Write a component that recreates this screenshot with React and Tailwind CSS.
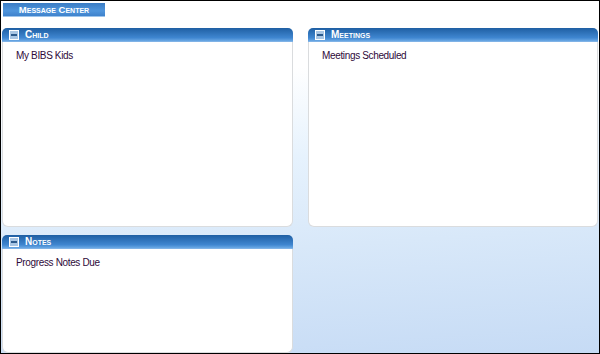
import React from 'react'

function MinusBox() {
  return (
    <span className="w-[10px] h-[10px] border border-white bg-[#a9c6e4] flex items-center justify-center shrink-0">
      <span className="w-[6px] h-[2px] bg-[#2c5a8c]" />
    </span>
  )
}

function Panel({ title, children, className = '' }) {
  return (
    <div className={`flex flex-col ${className}`}>
      <div className="h-[14px] rounded-t-[5px] bg-[linear-gradient(#1f5fa3,#3f86d0_75%,#6aa8e4)] flex items-center gap-[6px] pl-[7px] border-b border-[#7fb2e6]">
        <MinusBox />
        <span className="text-white font-bold text-[10px] leading-none [font-variant:small-caps]">
          {title}
        </span>
      </div>
      <div className="flex-1 bg-white rounded-b-[6px] border border-t-0 border-[#dadcde] pl-[13px] pt-[7px] text-[10px] leading-[13px] tracking-[-0.35px] text-[#2e0a3a]">
        {children}
      </div>
    </div>
  )
}

export default function App() {
  return (
    <div className="w-[600px] h-[354px] border border-black overflow-hidden bg-[linear-gradient(176deg,#ffffff_22%,#e6f2fd_45%,#d8e8f9_68%,#c6dbf5_100%)] font-['Liberation_Sans','DejaVu_Sans',sans-serif] flex flex-col">
      <div className="pl-[2px] pt-[2px]">
        <div className="w-[102px] h-[14px] bg-[linear-gradient(#3a7cc4,#4f95dc_60%,#3f82cc)] border-b border-[#9cc4ec] flex items-center justify-center">
          <span className="text-white font-bold text-[9.5px] leading-none [font-variant:small-caps]">
            Message Center
          </span>
        </div>
      </div>
      <div className="flex-1 grid grid-cols-[291px_290px] grid-rows-[199px_1fr] gap-x-[15px] gap-y-[8px] pl-[1px] pt-[11px]">
        <Panel title="Child">My BIBS Kids</Panel>
        <Panel title="Meetings">Meetings Scheduled</Panel>
        <Panel title="Notes">Progress Notes Due</Panel>
      </div>
    </div>
  )
}
